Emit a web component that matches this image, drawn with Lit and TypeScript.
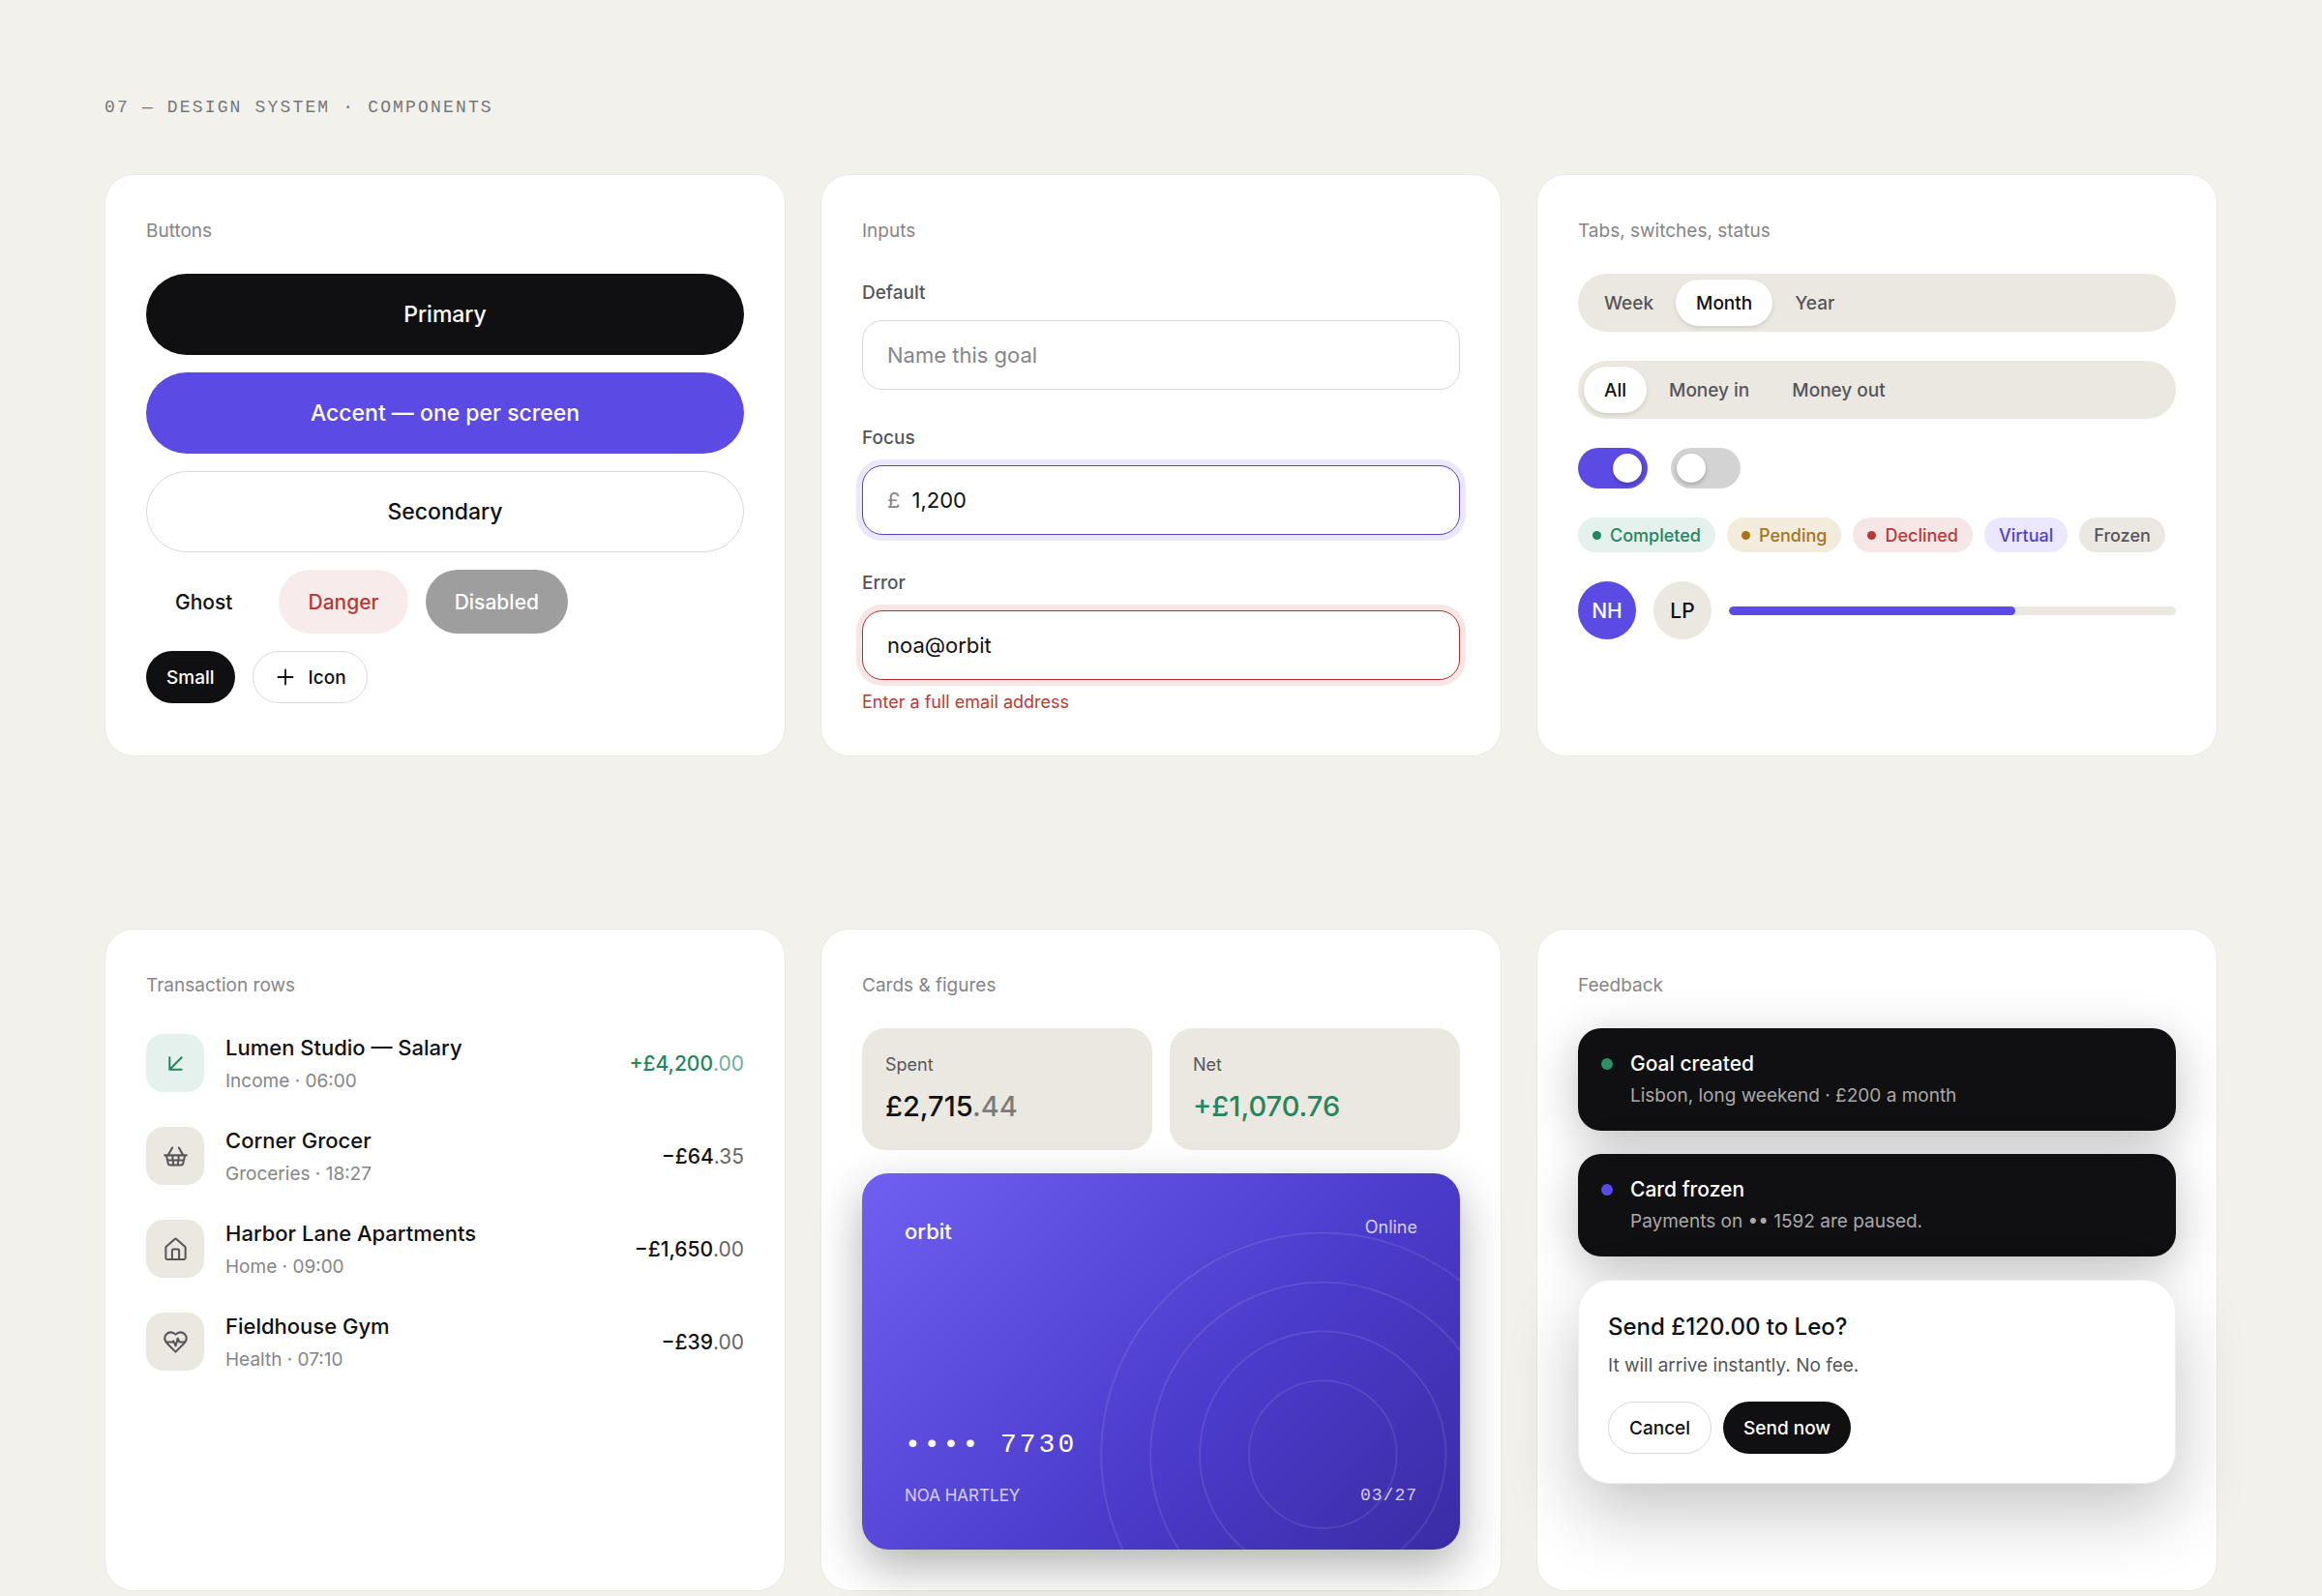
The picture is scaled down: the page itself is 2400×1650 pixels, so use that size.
import { LitElement, html, css, svg, nothing } from "lit";
import { customElement, state } from "lit/decorators.js";
import { classMap } from "lit/directives/class-map.js";
import { styleMap } from "lit/directives/style-map.js";

type IconName = "plus" | "income" | "basket" | "home" | "health";

const icons = {
  plus: svg`<path d="M12 4.500v15M4.500 12h15" />`,
  income: svg`<path d="M17.500 6.500 6.500 17.500M6.500 6.500v11h11" />`,
  basket: svg`<path d="m5 11 4-7M19 11l-4-7M2 11h20M3.500 11l1.600 7.400a2 2 0 0 0 2 1.600h9.800a2 2 0 0 0 2-1.600l1.700-7.400M9 11l1 9M15 11l-1 9M4.500 15.500h15" />`,
  home: svg`<path d="M3 10.300a1 1 0 0 1 .4-.8L11.300 2.600a1 1 0 0 1 1.400 0l7.900 6.900a1 1 0 0 1 .4.800V20a1.300 1.300 0 0 1-1.300 1.300H4.300A1.300 1.300 0 0 1 3 20z" /><path d="M15.200 21.300V13a1 1 0 0 0-1-1H9.800a1 1 0 0 0-1 1v8.300" />`,
  health: svg`<path d="M19 14c1.500-1.500 3-3.200 3-5.500A5.500 5.500 0 0 0 16.500 3c-1.800 0-3 .5-4.500 2-1.500-1.500-2.700-2-4.500-2A5.500 5.500 0 0 0 2 8.500c0 2.300 1.500 4 3 5.500l7 7z" /><path d="M3.200 12H9.500l.5-1 2 4.500 2-7 1.500 3.500h5.300" />`,
};

const icon = (name: IconName) => html`<svg class="icon" viewBox="0 0 24 24" aria-hidden="true">${icons[name]}</svg>`;

interface Transaction {
  icon: IconName;
  name: string;
  detail: string;
  whole: string;
  cents: string;
  income?: boolean;
}

const transactions: Transaction[] = [
  { icon: "income", name: "Lumen Studio — Salary", detail: "Income · 06:00", whole: "+£4,200", cents: ".00", income: true },
  { icon: "basket", name: "Corner Grocer", detail: "Groceries · 18:27", whole: "−£64", cents: ".35" },
  { icon: "home", name: "Harbor Lane Apartments", detail: "Home · 09:00", whole: "−£1,650", cents: ".00" },
  { icon: "health", name: "Fieldhouse Gym", detail: "Health · 07:10", whole: "−£39", cents: ".00" },
];

const statuses = [
  { label: "Completed", tone: "positive", dot: true },
  { label: "Pending", tone: "warning", dot: true },
  { label: "Declined", tone: "negative", dot: true },
  { label: "Virtual", tone: "accent", dot: false },
  { label: "Frozen", tone: "neutral", dot: false },
];

@customElement("app-root")
export class AppRoot extends LitElement {
  @state() private period = "Month";
  @state() private filter = "All";
  private progress = 64;

  static styles = css`
    :host {
      --bg: #f2f1ec;
      --surface: #ffffff;
      --sunken: #ebe8e1;
      --ink: #101012;
      --ink-2: #55555a;
      --ink-3: #85858a;
      --line: #d9d9da;
      --accent: #5b4ae3;
      --accent-soft: #ebe7fd;
      --green: #238660;
      --green-soft: #e5f1ec;
      --red: #b73a37;
      --red-soft: #f7e6e6;
      display: block;
      min-height: 100vh;
      box-sizing: border-box;
      padding: 96px 108px 0;
      background: var(--bg);
      color: var(--ink);
      font-family: Inter, "Liberation Sans", sans-serif;
      font-size: 22px;
      -webkit-font-smoothing: antialiased;
    }
    *, *::before, *::after { box-sizing: border-box; }
    h1, h2, h3, p, ul { margin: 0; padding: 0; font-weight: 400; }
    ul { list-style: none; }
    button, input { font: inherit; color: inherit; margin: 0; }

    .eyebrow {
      margin-bottom: 54px;
      font: 400 18px/30px "Liberation Mono", monospace;
      letter-spacing: 0.12em;
      color: #77777a;
    }
    .grid {
      display: grid;
      grid-template-columns: repeat(3, minmax(0, 1fr));
      gap: 36px;
    }
    .grid + .grid { margin-top: 178px; }
    .panel {
      padding: 42px;
      border: 1px solid #eae9e5;
      border-radius: 30px;
      background: var(--surface);
    }
    .panel-title {
      margin-bottom: 28px;
      font-size: 19px;
      line-height: 32px;
      color: var(--ink-3);
    }
    .stack { display: flex; flex-direction: column; }
    .gap-18 { gap: 18px; }
    .gap-24 { gap: 24px; }
    .gap-30 { gap: 30px; }
    .row { display: flex; align-items: center; }
    .row.gap-12 { gap: 12px; }
    .icon {
      width: 24px;
      height: 24px;
      flex: none;
      fill: none;
      stroke: currentColor;
      stroke-width: 1.8;
      stroke-linecap: round;
      stroke-linejoin: round;
    }

    .btn {
      display: inline-flex;
      align-items: center;
      justify-content: center;
      gap: 12px;
      height: 66px;
      padding: 0 30px;
      border: 0;
      border-radius: 42px;
      background: transparent;
      font-size: 21px;
      font-weight: 500;
      cursor: pointer;
    }
    .btn.large { height: 84px; font-size: 23px; }
    .btn.small { height: 54px; padding: 0 21px; font-size: 19px; }
    .btn.primary { background: var(--ink); color: #fff; }
    .btn.accent { background: var(--accent); color: #fff; }
    .btn.secondary { background: var(--surface); border: 1px solid var(--line); }
    .btn.danger { background: #f7eceb; color: var(--red); }
    .btn:disabled { opacity: 0.4; cursor: default; }

    .field { display: flex; flex-direction: column; }
    .field-label {
      margin-bottom: 9px;
      font-size: 19px;
      font-weight: 500;
      line-height: 39px;
      color: var(--ink-2);
    }
    .control {
      display: flex;
      align-items: center;
      gap: 12px;
      height: 72px;
      padding: 0 25px;
      border: 1px solid var(--line);
      border-radius: 21px;
      background: var(--surface);
    }
    .control.focused { border-color: #5342cf; box-shadow: 0 0 0 6px var(--accent-soft); }
    .control.invalid { border-color: #ad3330; box-shadow: 0 0 0 6px var(--red-soft); }
    .prefix { color: var(--ink-3); }
    .input {
      flex: 1;
      min-width: 0;
      height: 100%;
      padding: 0;
      border: 0;
      outline: 0;
      background: transparent;
    }
    .input::placeholder { color: var(--ink-3); opacity: 1; }
    .error {
      margin-top: 9px;
      font-size: 18px;
      line-height: 27px;
      color: var(--red);
    }

    .tabs {
      display: flex;
      gap: 2px;
      padding: 6px;
      border-radius: 30px;
      background: var(--sunken);
    }
    .tab {
      height: 48px;
      padding: 0 21px;
      border: 0;
      border-radius: 24px;
      background: transparent;
      font-size: 19px;
      font-weight: 500;
      color: var(--ink-2);
      cursor: pointer;
    }
    .tab.selected {
      background: var(--surface);
      color: var(--ink);
      box-shadow: 0 2px 4px rgba(16, 16, 18, 0.12);
    }
    .switches { display: flex; gap: 24px; }
    .switch {
      appearance: none;
      display: flex;
      width: 72px;
      height: 42px;
      padding: 6px;
      border-radius: 21px;
      background: #d3d3d3;
      cursor: pointer;
    }
    .switch::before {
      content: "";
      width: 30px;
      height: 30px;
      border-radius: 50%;
      background: #fff;
      box-shadow: 0 2px 4px rgba(16, 16, 18, 0.25);
    }
    .switch:checked { background: var(--accent); justify-content: flex-end; }
    .chips { display: flex; flex-wrap: wrap; gap: 12px; }
    .chip {
      display: inline-flex;
      align-items: center;
      gap: 9px;
      height: 36px;
      padding: 0 15px;
      border-radius: 18px;
      font-size: 18px;
      font-weight: 500;
    }
    .chip-dot { width: 9px; height: 9px; border-radius: 50%; background: currentColor; }
    .positive { background: var(--green-soft); color: var(--green); }
    .warning { background: #f3ecdd; color: #a8741a; }
    .negative { background: var(--red-soft); color: var(--red); }
    .chip.accent { background: var(--accent-soft); color: #4f3fd0; }
    .neutral { background: var(--sunken); color: var(--ink-2); }
    .avatar {
      display: grid;
      place-items: center;
      flex: none;
      width: 60px;
      height: 60px;
      border-radius: 50%;
      background: var(--sunken);
      font-size: 21px;
      font-weight: 500;
    }
    .avatar.me { background: var(--accent); color: #fff; }
    .meter { flex: 1; height: 9px; border-radius: 5px; background: var(--sunken); overflow: hidden; }
    .meter-fill { height: 100%; border-radius: 5px; background: var(--accent); }

    .txn { display: flex; align-items: center; gap: 22px; height: 72px; }
    .txn-icon {
      display: grid;
      place-items: center;
      flex: none;
      width: 60px;
      height: 60px;
      border-radius: 18px;
      background: var(--sunken);
      color: var(--ink-2);
    }
    .txn-icon .icon { width: 27px; height: 27px; }
    .txn-icon.positive { background: var(--green-soft); color: var(--green); }
    .txn-text { display: flex; flex-direction: column; gap: 3px; flex: 1; min-width: 0; }
    .txn-name { font-size: 22px; font-weight: 500; line-height: 34px; }
    .txn-detail { font-size: 19px; line-height: 30px; color: var(--ink-3); }
    .txn-amount { font-size: 21px; font-weight: 500; }
    .txn-amount.income { color: var(--green); }
    .cents { font-weight: 400; opacity: 0.65; }

    .figures { display: grid; grid-template-columns: 1fr 1fr; gap: 18px; }
    .figure {
      display: flex;
      flex-direction: column;
      gap: 8px;
      padding: 24px;
      border-radius: 24px;
      background: var(--sunken);
    }
    .figure-label { font-size: 18px; line-height: 28px; color: var(--ink-2); }
    .figure-value { font-size: 29px; font-weight: 500; line-height: 42px; }
    .figure-value.gain { color: var(--green); }
    .figure-value .cents { font-weight: 500; opacity: 0.5; }

    .bank-card {
      position: relative;
      display: flex;
      flex-direction: column;
      aspect-ratio: 1.59;
      padding: 42px 44px;
      border-radius: 27px;
      overflow: hidden;
      background: linear-gradient(135deg, #7060f2 0%, #4b3bcb 60%, #3a2ca4 100%);
      box-shadow: 0 18px 48px rgba(16, 16, 18, 0.32);
      color: #fff;
    }
    .rings {
      position: absolute;
      inset: 0;
      width: 100%;
      height: 100%;
      fill: none;
      stroke: #fff;
      stroke-opacity: 0.1;
      stroke-width: 1;
    }
    .card-top, .card-bottom { display: flex; justify-content: space-between; align-items: flex-start; }
    .card-top { flex: 1; }
    .brand { font-size: 22px; font-weight: 500; line-height: 36px; }
    .card-kind { font-size: 18px; line-height: 27px; opacity: 0.75; }
    .card-number {
      margin-bottom: 18px;
      font: 400 28px/42px "Liberation Mono", monospace;
      letter-spacing: 3px;
    }
    .card-holder { font-size: 17px; line-height: 27px; opacity: 0.75; }
    .card-expiry {
      font: 400 18px/27px "Liberation Mono", monospace;
      letter-spacing: 1px;
      opacity: 0.75;
    }

    .toast {
      display: flex;
      gap: 18px;
      padding: 21px 24px;
      border-radius: 24px;
      background: var(--ink);
      color: #fff;
      box-shadow: 0 12px 48px rgba(16, 16, 18, 0.26);
    }
    .toast-dot {
      flex: none;
      width: 12px;
      height: 12px;
      margin-top: 10px;
      border-radius: 50%;
      background: #2f8f69;
    }
    .toast-dot.info { background: var(--accent); }
    .toast-text { display: flex; flex-direction: column; gap: 3px; }
    .toast-title { font-size: 21px; font-weight: 500; line-height: 31px; }
    .toast-detail { font-size: 19px; line-height: 30px; color: #a9a9aa; }
    .dialog {
      padding: 30px;
      border: 1px solid #eeeeee;
      border-radius: 33px;
      background: var(--surface);
      box-shadow: 0 30px 72px rgba(16, 16, 18, 0.24);
    }
    .dialog-title { margin-bottom: 8px; font-size: 24px; font-weight: 500; line-height: 35px; }
    .dialog-text { margin-bottom: 22px; font-size: 19px; line-height: 30px; color: var(--ink-2); }
  `;

  private renderTabs(label: string, options: string[], selected: string, pick: (value: string) => void) {
    return html`
      <div class="tabs" role="tablist" aria-label=${label}>
        ${options.map(
          (option) => html`<button
            class=${classMap({ tab: true, selected: option === selected })}
            role="tab"
            aria-selected=${option === selected ? "true" : "false"}
            @click=${() => pick(option)}
          >${option}</button>`,
        )}
      </div>
    `;
  }

  private renderButtons() {
    return html`
      <section class="panel">
        <h2 class="panel-title">Buttons</h2>
        <div class="stack gap-18">
          <button class="btn large primary">Primary</button>
          <button class="btn large accent">Accent — one per screen</button>
          <button class="btn large secondary">Secondary</button>
          <div class="row gap-18">
            <button class="btn">Ghost</button>
            <button class="btn danger">Danger</button>
            <button class="btn primary" disabled>Disabled</button>
          </div>
          <div class="row gap-18">
            <button class="btn small primary">Small</button>
            <button class="btn small secondary">${icon("plus")}Icon</button>
          </div>
        </div>
      </section>
    `;
  }

  private renderInputs() {
    return html`
      <section class="panel">
        <h2 class="panel-title">Inputs</h2>
        <div class="stack gap-30">
          <div class="field">
            <label class="field-label" for="goal">Default</label>
            <div class="control"><input class="input" id="goal" type="text" placeholder="Name this goal" /></div>
          </div>
          <div class="field">
            <label class="field-label" for="amount">Focus</label>
            <div class="control focused">
              <span class="prefix">£</span>
              <input class="input" id="amount" type="text" inputmode="decimal" value="1,200" />
            </div>
          </div>
          <div class="field">
            <label class="field-label" for="email">Error</label>
            <div class="control invalid">
              <input class="input" id="email" type="text" value="noa@orbit" aria-invalid="true" aria-describedby="email-error" />
            </div>
            <p class="error" id="email-error">Enter a full email address</p>
          </div>
        </div>
      </section>
    `;
  }

  private renderControls() {
    return html`
      <section class="panel">
        <h2 class="panel-title">Tabs, switches, status</h2>
        <div class="stack gap-30">
          ${this.renderTabs("Period", ["Week", "Month", "Year"], this.period, (v) => (this.period = v))}
          ${this.renderTabs("Direction", ["All", "Money in", "Money out"], this.filter, (v) => (this.filter = v))}
          <div class="switches">
            <input class="switch" type="checkbox" role="switch" aria-label="Notifications" checked />
            <input class="switch" type="checkbox" role="switch" aria-label="Round-ups" />
          </div>
          <div class="chips">
            ${statuses.map(
              (s) => html`<span class="chip ${s.tone}">${s.dot ? html`<span class="chip-dot"></span>` : nothing}${s.label}</span>`,
            )}
          </div>
          <div class="row gap-18">
            <span class="avatar me">NH</span>
            <span class="avatar">LP</span>
            <div class="meter" role="progressbar" aria-label="Goal progress" aria-valuenow=${this.progress} aria-valuemin="0" aria-valuemax="100">
              <div class="meter-fill" style=${styleMap({ width: `${this.progress}%` })}></div>
            </div>
          </div>
        </div>
      </section>
    `;
  }

  private renderTransactions() {
    return html`
      <section class="panel">
        <h2 class="panel-title">Transaction rows</h2>
        <ul class="stack gap-24">
          ${transactions.map(
            (t) => html`
              <li class="txn">
                <span class=${classMap({ "txn-icon": true, positive: !!t.income })}>${icon(t.icon)}</span>
                <div class="txn-text">
                  <span class="txn-name">${t.name}</span>
                  <span class="txn-detail">${t.detail}</span>
                </div>
                <span class=${classMap({ "txn-amount": true, income: !!t.income })}>${t.whole}<span class="cents">${t.cents}</span></span>
              </li>
            `,
          )}
        </ul>
      </section>
    `;
  }

  private renderCards() {
    return html`
      <section class="panel">
        <h2 class="panel-title">Cards &amp; figures</h2>
        <div class="stack gap-24">
          <div class="figures">
            <div class="figure">
              <span class="figure-label">Spent</span>
              <span class="figure-value">£2,715<span class="cents">.44</span></span>
            </div>
            <div class="figure">
              <span class="figure-label">Net</span>
              <span class="figure-value gain">+£1,070.76</span>
            </div>
          </div>
          <div class="bank-card">
            <svg class="rings" viewBox="0 0 340 214" preserveAspectRatio="xMidYMid slice" aria-hidden="true">
              ${[42, 70, 98, 126].map((r) => svg`<circle cx="262" cy="160" r=${r} />`)}
            </svg>
            <div class="card-top"><span class="brand">orbit</span><span class="card-kind">Online</span></div>
            <div class="card-number">•••• 7730</div>
            <div class="card-bottom"><span class="card-holder">NOA HARTLEY</span><span class="card-expiry">03/27</span></div>
          </div>
        </div>
      </section>
    `;
  }

  private renderFeedback() {
    return html`
      <section class="panel">
        <h2 class="panel-title">Feedback</h2>
        <div class="stack gap-24">
          <div class="toast" role="status">
            <span class="toast-dot"></span>
            <div class="toast-text">
              <span class="toast-title">Goal created</span>
              <span class="toast-detail">Lisbon, long weekend · £200 a month</span>
            </div>
          </div>
          <div class="toast" role="status">
            <span class="toast-dot info"></span>
            <div class="toast-text">
              <span class="toast-title">Card frozen</span>
              <span class="toast-detail">Payments on •• 1592 are paused.</span>
            </div>
          </div>
          <div class="dialog" role="group" aria-labelledby="dialog-title">
            <h3 class="dialog-title" id="dialog-title">Send £120.00 to Leo?</h3>
            <p class="dialog-text">It will arrive instantly. No fee.</p>
            <div class="row gap-12">
              <button class="btn small secondary">Cancel</button>
              <button class="btn small primary">Send now</button>
            </div>
          </div>
        </div>
      </section>
    `;
  }

  render() {
    return html`
      <h1 class="eyebrow">07 — DESIGN SYSTEM · COMPONENTS</h1>
      <div class="grid">${this.renderButtons()}${this.renderInputs()}${this.renderControls()}</div>
      <div class="grid">${this.renderTransactions()}${this.renderCards()}${this.renderFeedback()}</div>
    `;
  }
}
